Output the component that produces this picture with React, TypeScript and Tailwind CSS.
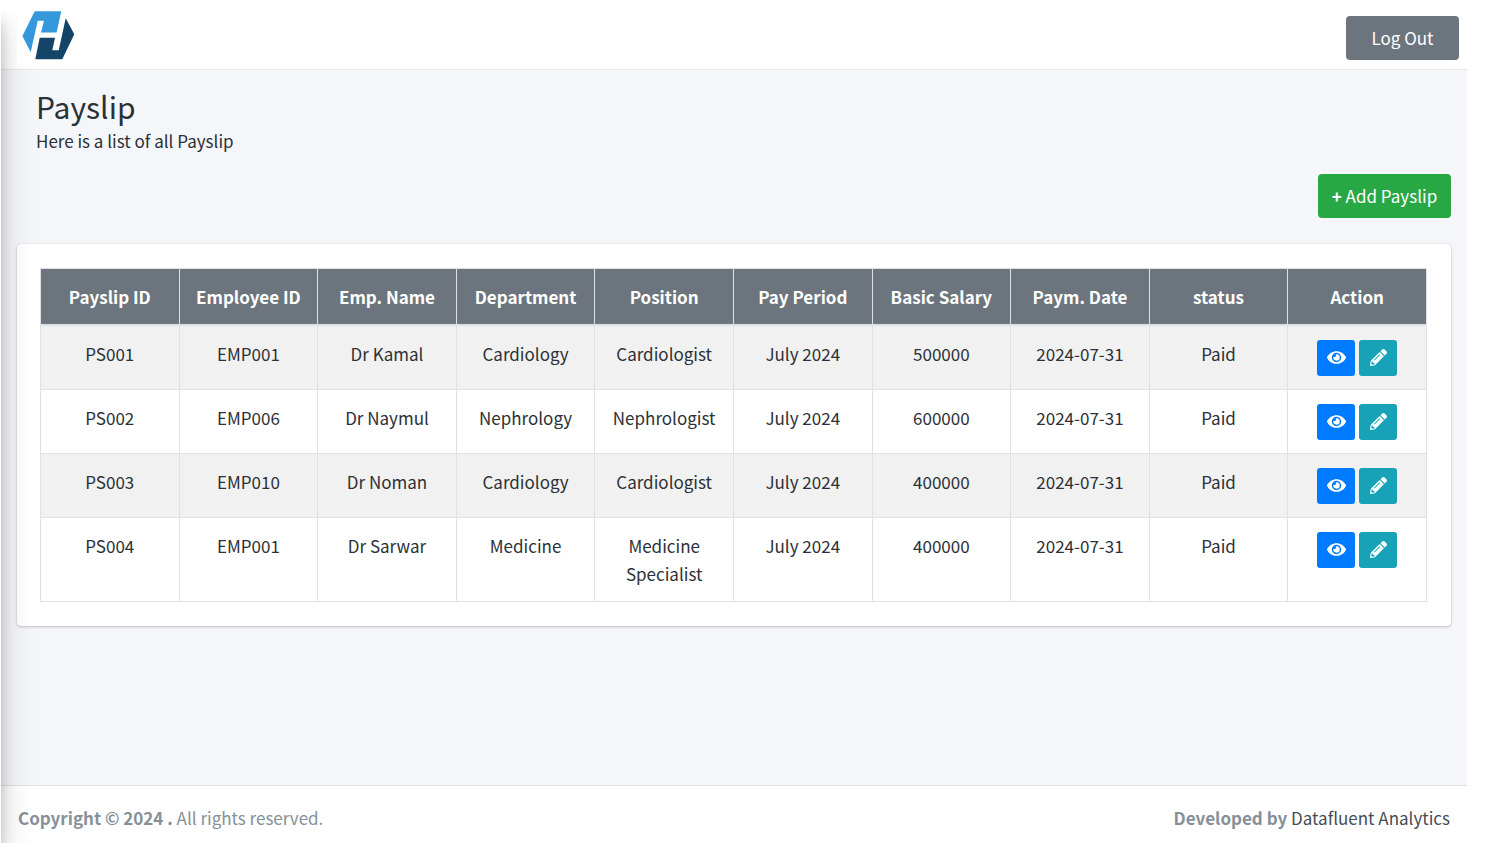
import { FaEye, FaPencilAlt } from "react-icons/fa";

type Payslip = {
  id: string;
  employeeId: string;
  name: string;
  department: string;
  position: string;
  period: string;
  salary: string;
  date: string;
  status: string;
};

const columns = [
  "Payslip ID",
  "Employee ID",
  "Emp. Name",
  "Department",
  "Position",
  "Pay Period",
  "Basic Salary",
  "Paym. Date",
  "status",
  "Action",
];

const payslips: Payslip[] = [
  { id: "PS001", employeeId: "EMP001", name: "Dr Kamal", department: "Cardiology", position: "Cardiologist", period: "July 2024", salary: "500000", date: "2024-07-31", status: "Paid" },
  { id: "PS002", employeeId: "EMP006", name: "Dr Naymul", department: "Nephrology", position: "Nephrologist", period: "July 2024", salary: "600000", date: "2024-07-31", status: "Paid" },
  { id: "PS003", employeeId: "EMP010", name: "Dr Noman", department: "Cardiology", position: "Cardiologist", period: "July 2024", salary: "400000", date: "2024-07-31", status: "Paid" },
  { id: "PS004", employeeId: "EMP001", name: "Dr Sarwar", department: "Medicine", position: "Medicine Specialist", period: "July 2024", salary: "400000", date: "2024-07-31", status: "Paid" },
];

function Logo() {
  return (
    <svg viewBox="0 0 53 50" className="h-[50px] w-[53px]" aria-hidden="true">
      <path fill="#3498db" d="M12.7 1.3H39.3L34.6 22.4H19L22 10.7H15.7L8.7 42.3L0.4 26Z" />
      <path fill="#154469" d="M43.7 8.3L52.3 24.3L40.3 49.3H13.3L17.7 27.7H33L30.3 40.3H36.7Z" />
    </svg>
  );
}

function Header() {
  return (
    <header className="flex items-start justify-between border-b border-[#e7eaed] bg-white pr-2">
      <a href="#" aria-label="Home" className="relative z-20 ml-4 block h-14 bg-white pl-[5px]">
        <Logo />
      </a>
      <button type="button" className="mt-[6px] mb-[9px] h-[44px] w-[113px] rounded bg-[#6c757d] text-white">
        Log Out
      </button>
    </header>
  );
}

function PayslipTable() {
  return (
    <table className="w-full table-fixed border-collapse text-center">
      <thead>
        <tr className="bg-[#6c757d] text-white">
          {columns.map((column) => (
            <th key={column} scope="col" className="h-14 border border-b-2 border-[#dee2e6] font-bold">
              {column}
            </th>
          ))}
        </tr>
      </thead>
      <tbody>
        {payslips.map((row) => (
          <tr key={row.id} className="align-top odd:bg-[#f1f1f1]">
            {Object.entries(row).map(([key, value]) => (
              <td key={key} className="border border-[#dee2e6] px-3 pt-[14px] pb-[13px] leading-7">
                {value}
              </td>
            ))}
            <td className="border border-[#dee2e6] px-3 pt-[14px] pb-[13px]">
              <div className="flex justify-center gap-1">
                <button type="button" aria-label={`View ${row.id}`} className="flex h-9 w-[38px] items-center justify-center rounded-[3px] bg-[#007bff] text-white">
                  <FaEye className="size-[19px]" />
                </button>
                <button type="button" aria-label={`Edit ${row.id}`} className="flex h-9 w-[38px] items-center justify-center rounded-[3px] bg-[#17a2b8] text-white">
                  <FaPencilAlt className="size-[17px]" />
                </button>
              </div>
            </td>
          </tr>
        ))}
      </tbody>
    </table>
  );
}

export default function App() {
  return (
    <div className="flex min-h-screen flex-col bg-white pt-[10px] pr-[18px] pb-[7px] pl-px font-['Noto_Sans_CJK_SC','Noto_Sans',sans-serif] text-[17px] text-[#2c3136]">
      <div className="relative flex flex-1 flex-col overflow-hidden">
        <div className="pointer-events-none absolute inset-y-0 -left-64 z-10 w-64 shadow-[0_16px_31px_rgba(0,0,0,0.2),0_11px_11px_rgba(0,0,0,0.16)]" />
        <Header />
        <main className="flex-1 bg-[#f4f6f9] px-4">
          <div className="px-[19px] pt-4">
            <h1 className="text-[30px] leading-10">Payslip</h1>
            <p className="leading-[30px]">Here is a list of all Payslip</p>
          </div>
          <div className="mt-[18px] flex justify-end">
            <button type="button" className="h-[44px] w-[133px] rounded bg-[#28a745] text-white">
              <span className="font-bold">+</span> Add Payslip
            </button>
          </div>
          <section className="mt-[26px] rounded bg-white p-6 pl-[23px] shadow-[0_0_1px_rgba(0,0,0,0.2),0_1px_3px_rgba(0,0,0,0.2)]">
            <PayslipTable />
          </section>
        </main>
        <footer className="flex h-[58px] items-center justify-between border-t border-[#dee2e6] bg-white px-[17px] pt-1.5 text-[#869099]">
          <p>
            <strong>Copyright © 2024 .</strong> All rights reserved.
          </p>
          <p>
            <strong>Developed by</strong> <span className="text-[#454d55]">Datafluent Analytics</span>
          </p>
        </footer>
      </div>
    </div>
  );
}
